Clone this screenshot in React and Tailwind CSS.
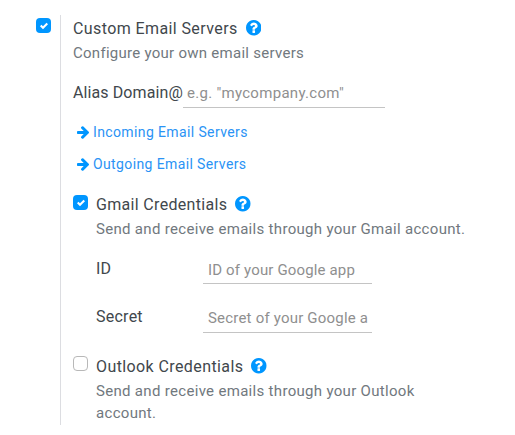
import React from "react";

function QuestionIcon() {
  return (
    <svg viewBox="128 128 1536 1536" className="size-[15.5px] shrink-0 text-[#0096ff]" fill="currentColor">
      <path d="M1024 1376v-192q0-14-9-23t-23-9H800q-14 0-23 9t-9 23v192q0 14 9 23t23 9h192q14 0 23-9t9-23zm256-672q0-88-55.5-163T1086 425t-170-41q-243 0-371 213-15 24 8 42l132 100q7 6 19 6 16 0 25-12 53-68 86-92 34-24 86-24 48 0 85.500 26t37.500 59q0 38-20 61t-68 45q-63 28-115.500 86.500T768 1020v36q0 14 9 23t23 9h192q14 0 23-9t9-23q0-19 21.500-49.500T1100 957q32-18 49-28.500t46-35 44.500-48 28-60.500 12.500-81zm384 192q0 209-103 385.500T1281.500 1561 896 1664t-385.500-103T231 1281.500 128 896t103-385.500T510.500 231 896 128t385.500 103T1561 510.500 1664 896z" />
    </svg>
  );
}

function ArrowIcon() {
  return (
    <svg viewBox="128 181 1472 1558" className="h-[13px] w-[12px] shrink-0 text-[#0096ff]" fill="currentColor">
      <path d="M1600 960q0 54-37 91l-651 651q-39 37-91 37-51 0-90-37l-75-75q-38-38-38-91t38-91l293-293H245q-52 0-84.500-37.500T128 1024V896q0-53 32.500-90.500T245 768h704L656 474q-38-36-38-90t38-90l75-75q38-38 90-38 53 0 91 38l651 651q37 35 37 90z" />
    </svg>
  );
}

function Checkbox({ checked }) {
  return (
    <span
      role="checkbox"
      aria-checked={checked}
      className={
        checked
          ? "flex size-[15px] shrink-0 items-center justify-center rounded-[4px] bg-[#0096ff]"
          : "block size-[15px] shrink-0 rounded-[4px] border border-[#b8b8b8] bg-white"
      }
    >
      {checked && (
        <svg viewBox="0 0 8 8" className="size-[8px]">
          <path d="M6.564.75l-3.59 3.612-1.538-1.55L0 4.26 2.974 7.25 8 2.193z" fill="#fff" />
        </svg>
      )}
    </span>
  );
}

function Heading({ tracking = "tracking-[0.4px]", children }) {
  return (
    <div className={`flex h-[26px] items-center gap-[8px] text-[16px] whitespace-nowrap text-[#41474c] ${tracking}`}>
      <span className="pt-[2px]">{children}</span>
      <QuestionIcon />
    </div>
  );
}

function ServerLink({ children }) {
  return (
    <a className="flex h-8 items-center gap-1 pl-1 text-[14px] tracking-[0.38px] whitespace-nowrap text-[#2a93f5]">
      <ArrowIcon />
      <span>{children}</span>
    </a>
  );
}

function Field({ label, placeholder, lift = false }) {
  return (
    <div className="flex h-[29px]">
      <label
        className={`w-[107px] text-[16px] tracking-[0.25px] text-[#41474c] ${lift ? "leading-[25px]" : "leading-[27px]"}`}
      >
        {label}
      </label>
      <input
        placeholder={placeholder}
        className={`h-[29px] w-[169px] border-b border-[#c4c4c4] pl-[5px] text-[15px] outline-none placeholder:text-[#8f8f8f] ${
          lift ? "pr-[2px] tracking-[0.2px]" : "pr-[5px] pt-[1px] tracking-[0.15px]"
        }`}
      />
    </div>
  );
}

export default function App() {
  return (
    <div className="flex h-[435px] w-[515px] overflow-hidden bg-white pt-[15px] pl-9 font-['Roboto','Liberation_Sans',sans-serif]">
      <div className="w-6 shrink-0 pt-[3px]">
        <Checkbox checked />
      </div>
      <section className="h-[410px] flex-1 border-l border-[#dcdde1] pl-3">
        <Heading>Custom Email Servers</Heading>
        <p className="text-[15px] leading-[24px] tracking-[0.27px] text-[#71787e]">
          Configure your own email servers
        </p>
        <div className="mt-[14px] flex h-[29px]">
          <label className="w-[110px] text-[16px] leading-[28px] tracking-[0.1px] whitespace-nowrap text-[#41474c]">
            Alias Domain@
          </label>
          <input
            placeholder={'e.g. "mycompany.com"'}
            className="h-[29px] w-[202px] border-b border-[#c4c4c4] px-1 text-[15px] tracking-[0.3px] outline-none placeholder:text-[#8f8f8f]"
          />
        </div>
        <nav className="mt-2">
          <ServerLink>Incoming Email Servers</ServerLink>
          <ServerLink>Outgoing Email Servers</ServerLink>
        </nav>
        <div className="mt-[11px] flex gap-2">
          <div className="pt-[4px]">
            <Checkbox checked />
          </div>
          <div>
            <Heading tracking="tracking-[0.32px]">Gmail Credentials</Heading>
            <p className="text-[15px] leading-[24px] tracking-[0.31px] whitespace-nowrap text-[#71787e]">
              Send and receive emails through your Gmail account.
            </p>
            <div className="mt-[14px] flex flex-col gap-5">
              <Field label="ID" placeholder="ID of your Google app" />
              <Field label="Secret" placeholder="Secret of your Google a" lift />
            </div>
          </div>
        </div>
        <div className="mt-5 flex gap-2">
          <div className="pt-[3px]">
            <Checkbox checked={false} />
          </div>
          <div>
            <Heading>Outlook Credentials</Heading>
            <p className="pt-px text-[15px] leading-[22px] tracking-[0.31px] whitespace-nowrap text-[#71787e]">
              Send and receive emails through your Outlook
              <br />
              account.
            </p>
          </div>
        </div>
      </section>
    </div>
  );
}
